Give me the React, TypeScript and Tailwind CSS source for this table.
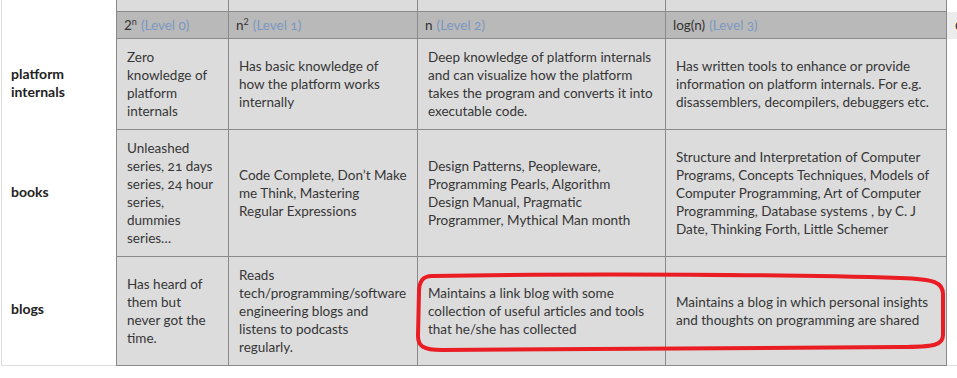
import React from "react";

const Lines = ({ lines }: { lines: string[] }) => (
  <div>
    {lines.map((l, i) => (
      <div key={i} className="whitespace-nowrap">
        {l}
      </div>
    ))}
  </div>
);

const Label = ({ children, last }: { children: React.ReactNode; last?: boolean }) => (
  <div
    className={
      "flex items-center pl-[9px] pb-[4px] border-l border-[#dddddd] bg-white font-bold text-[14px] text-[#222222] " +
      (last ? "border-b" : "")
    }
  >
    {children}
  </div>
);

const Cell = ({ lines, first }: { lines: string[]; first?: boolean }) => (
  <div
    className={
      "flex items-center bg-[#dcdcdc] border-r border-b border-[#8a8a8a] px-[10px] py-[9px] text-[#363636] " +
      (first ? "border-l" : "")
    }
  >
    <Lines lines={lines} />
  </div>
);

const Extra = ({ last }: { last?: boolean }) => (
  <div className={"bg-white border-[#dddddd] " + (last ? "border-b" : "")} />
);

const Head = ({ main, sup, level, first }: { main: string; sup?: string; level: string; first?: boolean }) => (
  <div
    className={
      "flex items-center bg-[#b9b9b9] border-r border-b border-[#8a8a8a] px-[7px] py-[4px] whitespace-nowrap text-[#333333] " +
      (first ? "border-l" : "")
    }
  >
    <span>
      {main}
      {sup ? <sup className="text-[9px] relative top-[-5px] align-baseline">{sup}</sup> : null}
    </span>
    <span className="ml-[4px] text-[#7a98c0] oldstyle-nums">({level})</span>
  </div>
);

export default function App() {
  return (
    <div className="relative w-[957px] h-[378px] overflow-hidden bg-white [font-family:Lato,'Open_Sans',sans-serif] text-[13.5px] leading-[18px]">
      <div className="pl-[1px] grid grid-cols-[115px_113px_189px_248px_281px_60px]">
        {/* partial top row */}
        <Label>{""}</Label>
        <div className="h-[12px] bg-[#dcdcdc] border-l border-r border-b border-[#8a8a8a]" />
        <div className="h-[12px] bg-[#dcdcdc] border-r border-b border-[#8a8a8a]" />
        <div className="h-[12px] bg-[#dcdcdc] border-r border-b border-[#8a8a8a]" />
        <div className="h-[12px] bg-[#dcdcdc] border-r border-b border-[#8a8a8a]" />
        <Extra />

        {/* header */}
        <div className="border-l border-[#dddddd] bg-white" />
        <Head main="2" sup="n" level="Level 0" first />
        <Head main="n" sup="2" level="Level 1" />
        <Head main="n" level="Level 2" />
        <Head main="log(n)" level="Level 3" />
        <div className="flex items-center bg-[#ececec] px-[8px] text-[#333333] whitespace-nowrap">Comments</div>

        {/* platform internals */}
        <Label>
          <Lines lines={["platform", "internals"]} />
        </Label>
        <Cell first lines={["Zero", "knowledge of", "platform", "internals"]} />
        <Cell lines={["Has basic knowledge of", "how the platform works", "internally"]} />
        <Cell
          lines={[
            "Deep knowledge of platform internals",
            "and can visualize how the platform",
            "takes the program and converts it into",
            "executable code.",
          ]}
        />
        <Cell
          lines={[
            "Has written tools to enhance or provide",
            "information on platform internals. For e.g.",
            "disassemblers, decompilers, debuggers etc.",
          ]}
        />
        <Extra />

        {/* books */}
        <Label>books</Label>
        <div className="flex items-center bg-[#dcdcdc] border-l border-r border-b border-[#8a8a8a] px-[10px] py-[9px] text-[#363636] oldstyle-nums">
          <Lines lines={["Unleashed", "series, 21 days", "series, 24 hour", "series,", "dummies", "series…"]} />
        </div>
        <Cell lines={["Code Complete, Don’t Make", "me Think, Mastering", "Regular Expressions"]} />
        <Cell
          lines={[
            "Design Patterns, Peopleware,",
            "Programming Pearls, Algorithm",
            "Design Manual, Pragmatic",
            "Programmer, Mythical Man month",
          ]}
        />
        <Cell
          lines={[
            "Structure and Interpretation of Computer",
            "Programs, Concepts Techniques, Models of",
            "Computer Programming, Art of Computer",
            "Programming, Database systems , by C. J",
            "Date, Thinking Forth, Little Schemer",
          ]}
        />
        <Extra />

        {/* blogs */}
        <Label last>blogs</Label>
        <Cell first lines={["Has heard of", "them but", "never got the", "time."]} />
        <Cell
          lines={["Reads", "tech/programming/software", "engineering blogs and", "listens to podcasts", "regularly."]}
        />
        <Cell
          lines={[
            "Maintains a link blog with some",
            "collection of useful articles and tools",
            "that he/she has collected",
          ]}
        />
        <Cell lines={["Maintains a blog in which personal insights", "and thoughts on programming are shared"]} />
        <Extra last />
      </div>

      <svg className="absolute left-0 top-0 pointer-events-none" width="957" height="378" viewBox="0 0 957 378">
        <path
          d="M 432 276 C 600 273, 800 275, 900 278 C 934 279, 944 282, 943 296 L 943 335 C 943 345, 935 347, 900 347 C 750 348, 600 349, 442 350 C 423 350, 418 346, 418 336 L 419 292 C 419 281, 423 276, 432 276 Z"
          fill="none"
          stroke="#ea1c24"
          strokeWidth="4"
        />
      </svg>
    </div>
  );
}
